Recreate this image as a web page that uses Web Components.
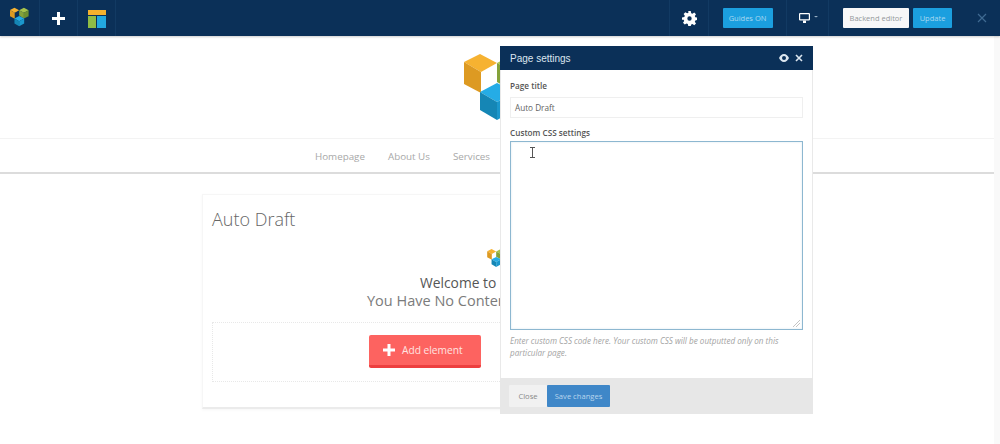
<!DOCTYPE html>
<html lang="en">
<head>
<meta charset="utf-8">
<title>Page settings</title>
<style>
  html, body { margin: 0; height: 100%; background: #fff; overflow: hidden; }
  body { font-family: "Open Sans", "Liberation Sans", sans-serif; color: #555; }
</style>
</head>
<body>
<vc-app></vc-app>

<script>
'use strict';

const LOGO = `<svg viewBox="0 0 72 66" width="100%" height="100%" aria-hidden="true">
  <path fill="#f6b231" d="M0 8 16 0 33 9 17 18z"/>
  <path fill="#dd9a22" d="M0 8 17 18V39L0 30z"/>
  <path fill="#a7c24b" d="M33 9 50 0 67 9 50 18z"/>
  <path fill="#84a23a" d="M33 9 50 18V38L33 28z"/>
  <path fill="#6f8f30" d="M50 18 67 9V30L50 38z"/>
  <path fill="#25ace6" d="M16 38 33 29 51 38 33 48z"/>
  <path fill="#1586b5" d="M16 38 33 48V66L16 56z"/>
  <path fill="#1b97cc" d="M33 48 51 38V56L33 66z"/>
</svg>`;

function define(name, css, html) {
  customElements.define(name, class extends HTMLElement {
    constructor() {
      super();
      this.attachShadow({ mode: 'open' }).innerHTML = `<style>${css}</style>${html}`;
    }
  });
}

define('vc-toolbar', `
  :host { display: flex; align-items: stretch; height: 36px; background: #0b3058; box-shadow: 0 1px 2px rgba(0,0,0,.2); position: relative; z-index: 2; }
  .cell { display: flex; align-items: center; justify-content: center; box-sizing: border-box; border-right: 1px solid #123a63; }
  .sp { flex: 1; border-right: 1px solid #123a63; }
  .btn { display: block; height: 20px; line-height: 20px; font-size: 7.5px; border-radius: 1px; text-align: center; flex: none; }
  .blue { background: #1b9fdf; color: #a9d8f0; }
  .white { background: #f7f7f8; color: #94979b; }
  .right { justify-content: flex-start; border: 0; gap: 4px; padding-left: 14px; width: 171px; }
  .x { display: block; flex: none; margin-left: 21px; }
`, `
  <div class="cell" style="width:40px"><span style="width:20px;height:20px;display:block;margin-top:-3px">${LOGO}</span></div>
  <div class="cell" style="width:38px">
    <svg width="13" height="13" viewBox="0 0 13 13"><path fill="#fff" d="M5 0h3v5h5v3H8v5H5V8H0V5h5z"/></svg>
  </div>
  <div class="cell" style="width:38px">
    <svg width="18" height="18" viewBox="0 0 18 18" style="margin-top:1px"><rect width="18" height="5" fill="#f4b12e"/><rect y="6" width="8" height="12" fill="#8fbc45"/><rect x="9" y="6" width="9" height="12" fill="#22a8e0"/></svg>
  </div>
  <div class="sp"></div>
  <div class="cell" style="width:39px">
    <svg width="15" height="15" viewBox="0 0 24 24"><path fill="#fff" fill-rule="evenodd" d="M10 0h4l.7 3.4 2 .8 2.900-1.900 2.800 2.800-1.900 2.900.8 2 3.700.7v3.600l-3.700.7-.8 2 1.900 2.900-2.800 2.800-2.900-1.900-2 .8L14 24h-4l-.7-3.400-2-.8-2.900 1.900-2.800-2.800 1.900-2.900-.8-2L0 13.800v-3.600L3.700 9.500l.8-2-1.900-2.900 2.800-2.800 2.900 1.900 2-.8zM12 8.500a3.500 3.500 0 1 0 0 7 3.500 3.500 0 0 0 0-7z"/></svg>
  </div>
  <div class="cell" style="width:78px"><span class="btn blue" style="width:50px">Guides ON</span></div>
  <div class="cell" style="width:42px">
    <svg width="19" height="10" viewBox="0 0 19 10" style="margin-left:2px"><path fill="none" stroke="#fff" stroke-width="1.2" d="M1.100.6h8.800q.5 0 .5.5v5.300q0 .5-.5.5H1.100q-.5 0-.5-.5V1.100q0-.5.5-.5z"/><path fill="#fff" d="M4 7.500h3V10H4z"/><path fill="#9db4c8" d="M15 3h4l-2 1.500z"/></svg>
  </div>
  <div class="cell right">
    <span class="btn white" style="width:66px">Backend editor</span>
    <span class="btn blue" style="width:39px">Update</span>
    <svg class="x" width="10" height="10" viewBox="0 0 10 10"><path stroke="#3f6a92" stroke-width="1.2" d="M1 1l8 8M9 1l-8 8"/></svg>
  </div>
`);

define('site-header', `
  :host { display: flex; justify-content: center; height: 102px; align-items: flex-start; padding-top: 18px; box-sizing: border-box; }
  .logo { width: 72px; height: 66px; }
`, `<div class="logo">${LOGO}</div>`);

define('site-nav', `
  :host { display: flex; justify-content: center; gap: 23px; height: 36px; padding-top: 1px; box-sizing: border-box; border-top: 1px solid #f3f3f3; border-bottom: 2px solid #dcdcdc; font-size: 9.8px; color: #a8a8a8; align-items: center; }
  span { display: block; }
  .ghost { width: 172px; }
`, `<span>Homepage</span><span>About Us</span><span>Services</span><span class="ghost"></span>`);

define('draft-card', `
  :host { display: block; width: 596px; height: 215px; margin: 20px auto 0; box-sizing: border-box; padding: 13px 9px 0; background: #fff; border: 1px solid #f6f6f6; border-bottom: 2px solid #ebebeb; box-shadow: 0 1px 3px rgba(0,0,0,.04); }
  h1 { margin: 0; font-weight: 300; font-size: 18px; line-height: 22px; color: #666; font-family: "Open Sans", sans-serif; }
  .mini { width: 20px; height: 18px; margin: 19px 0 7px 275px; }
  .w { font-size: 13.8px; line-height: 18px; color: #555; margin-left: 208px; white-space: nowrap; }
  .y { font-size: 14.5px; line-height: 18px; color: #7b7b7b; margin-left: 155px; white-space: nowrap; }
  .drop { height: 60px; margin-top: 12px; border: 1px dotted #e8e8e8; padding: 12px 0 0 156px; box-sizing: border-box; }
  .add { width: 112px; height: 33px; box-sizing: border-box; background: #fd6360; border-bottom: 3px solid #ed3f3f; border-radius: 2px; color: #ffe3e0; font-size: 10.2px; display: flex; align-items: center; gap: 7px; padding-left: 14px; }
`, `
  <h1>Auto Draft</h1>
  <div class="mini">${LOGO}</div>
  <div class="w">Welcome to</div>
  <div class="y">You Have No Content</div>
  <div class="drop">
    <div class="add">
      <svg width="12" height="12" viewBox="0 0 12 12"><path fill="#fff" d="M4.500 0h3v4.500H12v3H7.500V12h-3V7.500H0v-3h4.500z"/></svg>
      <span>Add element</span>
    </div>
  </div>
`);

define('settings-panel', `
  :host { position: absolute; left: 500px; top: 46px; width: 313px; height: 368px; display: flex; flex-direction: column; box-sizing: border-box; background: #fff; border-left: 1px solid #e9e9e9; border-right: 1px solid #e9e9e9; z-index: 3; font-size: 8.2px; color: #555; }
  header { display: flex; align-items: center; height: 24px; padding: 0 10px; background: #0b3058; color: #dce6ef; font-family: "Liberation Sans", sans-serif; font-size: 10px; margin: 0 -1px; }
  header span { flex: 1; }
  header svg { margin-left: 6px; display: block; }
  .body { flex: 1; padding: 10px 9px 0; display: flex; flex-direction: column; }
  label { display: block; font-weight: 600; font-size: 8.2px; line-height: 12px; color: #555; }
  .input { height: 21px; line-height: 20px; margin: 5px 0 9px; box-sizing: border-box; border: 1px solid #efefef; padding: 0 4px; color: #5f5f5f; }
  .area { height: 189px; margin-top: 2px; box-sizing: border-box; border: 1px solid #8db7d0; position: relative; box-shadow: inset 0 0 2px rgba(120,170,200,.3); }
  .grip { position: absolute; right: 2px; bottom: 2px; display: block; }
  .cursor { position: absolute; left: 19px; top: 5px; display: block; }
  .hint { margin: 5px 0 0; font-size: 8.1px; line-height: 12px; font-style: italic; color: #a3a3a3; }
  footer { height: 36px; background: #e7e7e7; display: flex; align-items: center; padding: 0 9px; margin: 0 -1px; }
  .b { height: 22px; line-height: 22px; text-align: center; font-size: 7.6px; border-radius: 1px; display: block; }
  .close { width: 38px; background: #f1f1f1; color: #888; }
  .save { width: 63px; background: #3f87c8; color: #b9d6ee; }
`, `
  <header>
    <span>Page settings</span>
    <svg width="10" height="8" viewBox="0 0 10 8"><path fill="#dce6ef" fill-rule="evenodd" d="M5 0c2.300 0 4 1.800 5 4-1 2.200-2.700 4-5 4S1 6.200 0 4c1-2.200 2.700-4 5-4zm0 2a2 2 0 1 0 0 4 2 2 0 0 0 0-4z"/></svg>
    <svg width="8" height="8" viewBox="0 0 8 8"><path stroke="#dce6ef" stroke-width="1.6" d="M1 1l6 6M7 1L1 7"/></svg>
  </header>
  <div class="body">
    <label>Page title</label>
    <div class="input">Auto Draft</div>
    <label>Custom CSS settings</label>
    <div class="area">
      <svg class="cursor" width="5" height="11" viewBox="0 0 5 11"><path fill="none" stroke="#555" d="M0 .5h5M0 10.500h5M2.500 .5v10"/></svg>
      <svg class="grip" width="7" height="7" viewBox="0 0 7 7"><path stroke="#c4c4c4" d="M0 7l7-7M3 7l4-4"/></svg>
    </div>
    <p class="hint">Enter custom CSS code here. Your custom CSS will be outputted only on this particular page.</p>
  </div>
  <footer>
    <span class="b close">Close</span>
    <span class="b save">Save changes</span>
  </footer>
`);

define('vc-app', `
  :host { display: block; position: relative; width: 1000px; height: 444px; overflow: hidden; background: #fff; }
  .scroll { position: absolute; right: 0; top: 36px; width: 6px; height: 408px; background: #f9f9f9; }
`, `
  <vc-toolbar></vc-toolbar>
  <site-header></site-header>
  <site-nav></site-nav>
  <draft-card></draft-card>
  <settings-panel></settings-panel>
  <div class="scroll"></div>
`);
</script>
</body>
</html>
